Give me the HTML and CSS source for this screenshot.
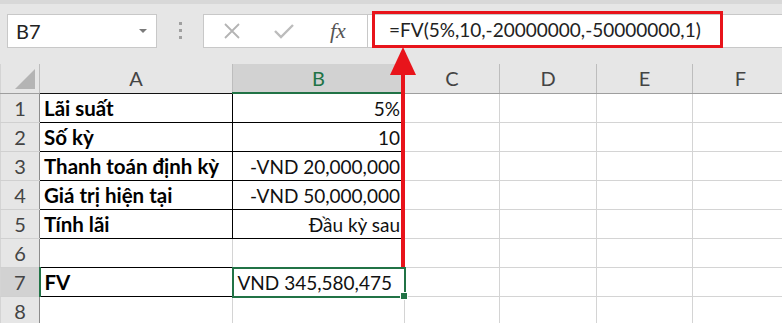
FILE: index.html
```html
<!DOCTYPE html>
<html lang="vi">
<head>
    <meta charset="UTF-8">
    <title>FV - Excel</title>
    <link rel="stylesheet" href="styles.css">
</head>
<body>
    <div class="formula-bar">
        <div class="name-box">
            <span>B7</span>
            <span class="caret"></span>
        </div>
        <div class="grip"><i></i><i></i><i></i></div>
        <div class="fx-buttons">
            <svg class="btn-cancel" width="18" height="18" viewBox="0 0 18 18">
                <path d="M2 2 L16 16 M16 2 L2 16" stroke="#b4b4b4" stroke-width="1.8" fill="none"/>
            </svg>
            <svg class="btn-enter" width="22" height="18" viewBox="0 0 22 18">
                <path d="M2 9 L8 15 L20 3" stroke="#bcbcbc" stroke-width="2.4" fill="none"/>
            </svg>
            <span class="fx">fx</span>
        </div>
        <div class="formula-input">
            <span class="formula-mark">=FV(5%,10,-20000000,-50000000,1)</span>
        </div>
    </div>

    <div class="sheet">
        <table class="grid">
            <colgroup>
                <col style="width:39px">
                <col style="width:193px">
                <col style="width:172px">
                <col style="width:95px">
                <col style="width:97px">
                <col style="width:96px">
                <col style="width:96px">
            </colgroup>
            <thead>
                <tr>
                    <th class="corner"><span class="corner-tri"></span></th>
                    <th class="col-a">A</th>
                    <th class="col-sel">B</th>
                    <th>C</th>
                    <th>D</th>
                    <th>E</th>
                    <th>F</th>
                </tr>
            </thead>
            <tbody>
                <tr>
                    <th class="row-h">1</th>
                    <td class="lbl boxed">Lãi suất</td>
                    <td class="num boxed">5%</td>
                    <td></td><td></td><td></td><td></td>
                </tr>
                <tr>
                    <th class="row-h">2</th>
                    <td class="lbl boxed">Số kỳ</td>
                    <td class="num boxed">10</td>
                    <td></td><td></td><td></td><td></td>
                </tr>
                <tr>
                    <th class="row-h">3</th>
                    <td class="lbl boxed">Thanh toán định kỳ</td>
                    <td class="num boxed">-VND 20,000,000</td>
                    <td></td><td></td><td></td><td></td>
                </tr>
                <tr>
                    <th class="row-h">4</th>
                    <td class="lbl boxed">Giá trị hiện tại</td>
                    <td class="num boxed">-VND 50,000,000</td>
                    <td></td><td></td><td></td><td></td>
                </tr>
                <tr>
                    <th class="row-h">5</th>
                    <td class="lbl boxed">Tính lãi</td>
                    <td class="num boxed">Đầu kỳ sau</td>
                    <td></td><td></td><td></td><td></td>
                </tr>
                <tr>
                    <th class="row-h">6</th>
                    <td class="above-box"></td>
                    <td class="above-box"></td>
                    <td></td><td></td><td></td><td></td>
                </tr>
                <tr>
                    <th class="row-h row-sel">7</th>
                    <td class="lbl boxed">FV</td>
                    <td class="num result">VND 345,580,475<span class="fill-handle"></span></td>
                    <td></td><td></td><td></td><td></td>
                </tr>
                <tr>
                    <th class="row-h">8</th>
                    <td></td><td></td><td></td><td></td><td></td><td></td>
                </tr>
            </tbody>
        </table>

        <!-- mũi tên chú thích -->
        <svg class="arrow" width="30" height="222" viewBox="0 0 30 222">
            <polygon points="14,1 1,29 27,29" fill="#e8141b"/>
            <rect x="12" y="28" width="4" height="193" fill="#e8141b"/>
        </svg>
    </div>
</body>
</html>
```

FILE: styles.css
```css
body {
    margin: 0;
    background: #ffffff;
    font-family: Lato, "Noto Sans", sans-serif;
    overflow: hidden;
}

.formula-bar {
    display: flex;
    align-items: center;
    height: 60px;
    border-top: 4px solid #d8d8d8;
    background: #e6e6e6;
    padding-left: 7px;
}

.name-box {
    display: flex;
    align-items: center;
    justify-content: space-between;
    box-sizing: border-box;
    width: 150px;
    height: 34px;
    margin-top: -7px;
    padding: 0 9px 0 8px;
    background: #fff;
    border: 1px solid #c8c8c8;
    font-size: 20px;
    color: #222;
}

.caret {
    width: 0;
    height: 0;
    border-left: 4px solid transparent;
    border-right: 4px solid transparent;
    border-top: 4px solid #7a7a7a;
}

.grip {
    display: flex;
    flex-direction: column;
    gap: 4px;
    margin: -7px 21px 0 22px;
}

.grip i {
    display: block;
    width: 3px;
    height: 3px;
    background: #a0a0a0;
}

.fx-buttons {
    display: flex;
    align-items: center;
    box-sizing: border-box;
    width: 164px;
    height: 34px;
    margin-top: -7px;
    background: #fff;
    border: 1px solid #c8c8c8;
    border-right: none;
}

.btn-cancel {
    margin-left: 19px;
}

.btn-enter {
    margin-left: 32px;
}

.fx {
    margin-left: 35px;
    font-family: "Liberation Serif", serif;
    font-style: italic;
    font-size: 22px;
    color: #555;
}

.formula-input {
    flex: 1;
    display: flex;
    align-items: center;
    box-sizing: border-box;
    height: 34px;
    margin-top: -7px;
    background: #fff;
    border: 1px solid #c8c8c8;
    border-right: none;
}

.formula-mark {
    display: flex;
    align-items: center;
    box-sizing: border-box;
    width: 351px;
    height: 37px;
    margin: -2px 0 0 4px;
    padding-left: 14px;
    border: 3px solid #e8141b;
    font-size: 19px;
    color: #222;
}

.sheet {
    position: relative;
}

.grid {
    table-layout: fixed;
    border-collapse: collapse;
    width: 788px;
}

.grid th,
.grid td {
    height: 28px;
    padding: 0;
    border: 1px solid #d4d4d4;
    font-size: 20px;
    white-space: nowrap;
    overflow: visible;
}

.grid thead th {
    background: #e6e6e6;
    font-weight: normal;
    color: #444;
    border-top: none;
    border-right: 1px solid #bdbdbd;
    border-bottom: 1px solid #9e9e9e;
}

.grid thead th.col-a {
    border-bottom-color: #111;
}

.grid thead th.col-sel {
    background: #d2d2d2;
    color: #217346;
    border-bottom: 2px solid #217346;
}

.corner {
    position: relative;
}

.corner-tri {
    position: absolute;
    right: 4px;
    bottom: 4px;
    width: 0;
    height: 0;
    border-left: 20px solid transparent;
    border-bottom: 20px solid #b4b4b4;
}

.row-h {
    background: #e6e6e6;
    font-weight: normal;
    color: #444;
    text-align: center;
    border-left: none;
    border-right: 1px solid #8c8c8c !important;
    border-bottom: 1px solid #d0d0d0 !important;
}

.row-sel {
    background: #d2d2d2;
    border-right: 2px solid #217346 !important;
}

.lbl {
    padding-left: 4px !important;
    font-weight: bold;
    font-size: 20.5px !important;
    color: #000;
}

.num {
    padding-right: 4px !important;
    text-align: right;
    font-size: 19px !important;
    color: #111;
}

.boxed {
    border: 1px solid #000 !important;
}

.above-box {
    border-bottom: 1px solid #000 !important;
}

.result {
    position: relative;
    padding-right: 12px !important;
    outline: 2px solid #217346;
    outline-offset: -1px;
}

.fill-handle {
    position: absolute;
    right: -4px;
    bottom: -4px;
    width: 6px;
    height: 6px;
    background: #217346;
    border: 1px solid #fff;
}

.arrow {
    position: absolute;
    left: 389px;
    top: -18px;
}
```
